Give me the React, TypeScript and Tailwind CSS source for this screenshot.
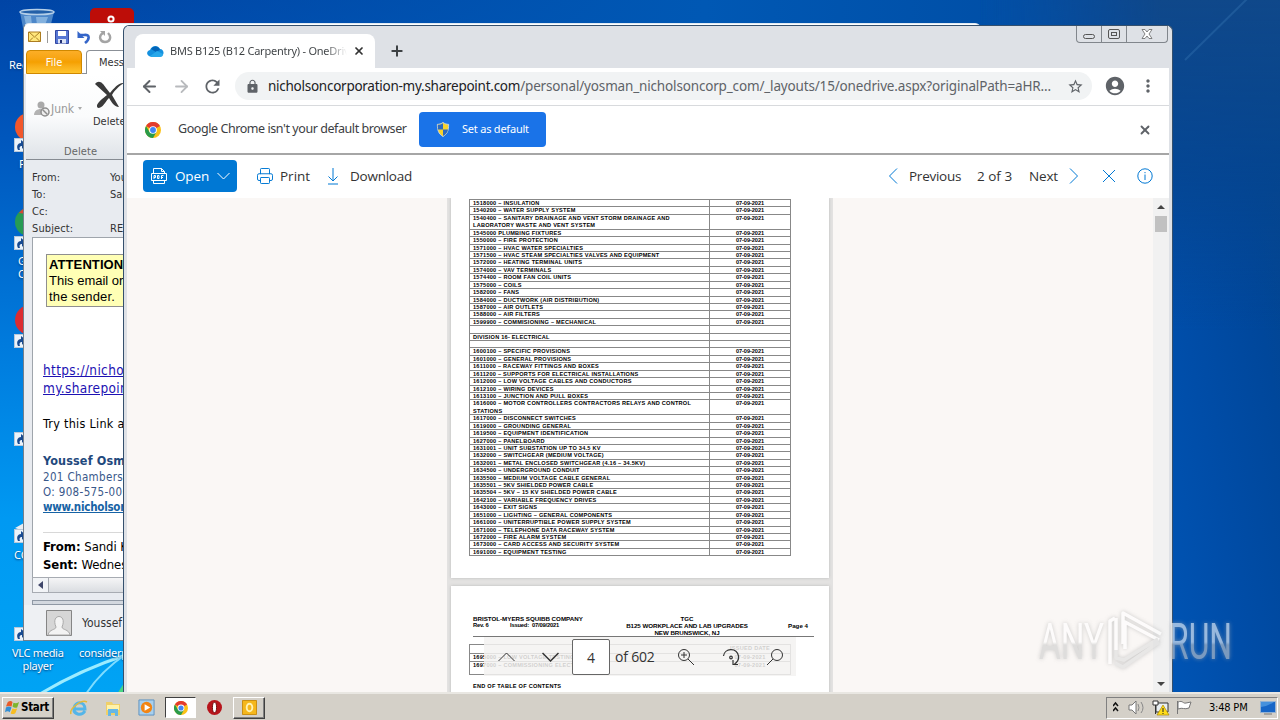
import type { ReactNode } from "react"
import { ArrowLeft, ArrowRight, Plus, Printer, X } from "lucide-react"
import { MdAccountCircle, MdLock, MdMoreVert, MdRefresh, MdStarBorder } from "react-icons/md"

type Row = { text: string; second?: string; date?: boolean }

const row = (text: string, second?: string): Row => ({ text, second, date: true })

const rows: Row[] = [
    row("1518000 – INSULATION"),
    row("1540200 – WATER SUPPLY SYSTEM"),
    row("1540400 – SANITARY DRAINAGE AND VENT STORM DRAINAGE AND", "LABORATORY WASTE AND VENT SYSTEM"),
    row("1545000 PLUMBING FIXTURES"),
    row("1550000 – FIRE PROTECTION"),
    row("1571000 – HVAC WATER SPECIALTIES"),
    row("1571500 – HVAC STEAM SPECIALTIES VALVES AND EQUIPMENT"),
    row("1572000 – HEATING TERMINAL UNITS"),
    row("1574000 – VAV TERMINALS"),
    row("1574400 – ROOM FAN COIL UNITS"),
    row("1575000 – COILS"),
    row("1582000 – FANS"),
    row("1584000 – DUCTWORK (AIR DISTRIBUTION)"),
    row("1587000 – AIR OUTLETS"),
    row("1588000 – AIR FILTERS"),
    row("1599900 – COMMISIONING – MECHANICAL"),
    { text: "" },
    { text: "DIVISION 16- ELECTRICAL" },
    { text: "" },
    row("1600100 – SPECIFIC PROVISIONS"),
    row("1601000 – GENERAL PROVISIONS"),
    row("1611000 – RACEWAY FITTINGS AND BOXES"),
    row("1611200 – SUPPORTS FOR ELECTRICAL INSTALLATIONS"),
    row("1612000 – LOW VOLTAGE CABLES AND CONDUCTORS"),
    row("1612100 – WIRING DEVICES"),
    row("1613100 – JUNCTION AND PULL BOXES"),
    row("1616000 – MOTOR CONTROLLERS CONTRACTORS RELAYS AND CONTROL", "STATIONS"),
    row("1617000 – DISCONNECT SWITCHES"),
    row("1619000 – GROUNDING GENERAL"),
    row("1619500 – EQUIPMENT IDENTIFICATION"),
    row("1627000 – PANELBOARD"),
    row("1631001 – UNIT SUBSTATION UP TO 34.5 KV"),
    row("1632000 – SWITCHGEAR (MEDIUM VOLTAGE)"),
    row("1632001 – METAL ENCLOSED SWITCHGEAR (4.16 – 34.5KV)"),
    row("1634500 – UNDERGROUND CONDUIT"),
    row("1635500 – MEDIUM VOLTAGE CABLE GENERAL"),
    row("1635501 – 5KV SHIELDED POWER CABLE"),
    row("1635504 – 5KV – 15 KV SHIELDED POWER CABLE"),
    row("1642100 – VARIABLE FREQUENCY DRIVES"),
    row("1643000 – EXIT SIGNS"),
    row("1651000 – LIGHTING – GENERAL COMPONENTS"),
    row("1661000 – UNITERRUPTIBLE POWER SUPPLY SYSTEM"),
    row("1671000 – TELEPHONE DATA RACEWAY SYSTEM"),
    row("1672000 – FIRE ALARM SYSTEM"),
    row("1673000 – CARD ACCESS AND SECURITY SYSTEM"),
    row("1691000 – EQUIPMENT TESTING"),
]

function ChromeLogo({ className }: { className: string }) {
    return (
        <svg viewBox="0 0 24 24" className={className}>
            <circle cx="12" cy="12" r="12" fill="#fbc116" />
            <path d="M12 12 1.6 6A12 12 0 0 1 22.4 6z" fill="#e33b2e" />
            <path d="M1.6 6A12 12 0 0 0 12 24l5.2-9L12 12 6.8 15z" fill="#2a9b4a" />
            <circle cx="12" cy="12" r="5.8" fill="#fff" />
            <circle cx="12" cy="12" r="4.4" fill="#4285f4" />
        </svg>
    )
}

function Shortcut({ className }: { className: string }) {
    return (
        <div className={`absolute left-[14px] h-[14px] w-[14px] border border-[#b8c8da] bg-[#eaf3fb] ${className}`}>
            <svg viewBox="0 0 12 12" className="h-3 w-3">
                <path d="M3 11C1 7 3 4 6 4V1l5 4-4 5V7C5 7 4 8 5 11z" fill="#174a91" />
            </svg>
        </div>
    )
}

function DesktopLabel({ className, children }: { className: string; children: ReactNode }) {
    return (
        <div className={`absolute whitespace-nowrap text-center font-['Noto_Sans',sans-serif] text-[11px] leading-[13px] text-white [text-shadow:0_1px_2px_#003a7a] ${className}`}>
            {children}
        </div>
    )
}

function Desktop() {
    return (
        <>
            <div className="absolute inset-x-0 top-0 h-[30px] bg-linear-to-r from-transparent via-[#0058b4] via-55% to-[#00479b]" />
            <div className="absolute inset-y-0 right-0 w-[300px] bg-[linear-gradient(80deg,#005fc6_0%,#0058bb_36%,#004da8_64%,#00479b_82%,#064488_100%)] [mask-image:linear-gradient(to_right,transparent,black_60%)]" />
            <div className="absolute right-0 top-0 h-[330px] w-[300px] bg-linear-to-b from-[#0f488a] via-[#06458f]/80 to-transparent [mask-image:linear-gradient(to_right,transparent,black_60%)]" />
            <svg className="absolute inset-0 h-full w-full" viewBox="0 0 1280 692">
                <path d="M1185 60 1248-2" stroke="#3b7cb8" strokeWidth="2" opacity="0.35" />
                <path d="M40 694Q80 670 126 655" stroke="#9cecff" strokeWidth="3" fill="none" />
                <path d="M86 694Q100 672 126 654" stroke="#7edcff" strokeWidth="2" fill="none" />
                <path d="M117 694 126 680V694z" fill="#49d884" />
                {/* recycle bin */}
                <path d="M20 12h34l-4 16H23z" fill="#5b93cf" opacity="0.85" />
                <path d="M24 16h7l1 9h-6zM36 17h12l-3 8h-8z" fill="#a9cdec" opacity="0.6" />
                <ellipse cx="37" cy="12" rx="17" ry="2.6" fill="#2360a8" stroke="#b5cfe8" strokeWidth="1.5" />
                <rect x="90" y="8" width="44" height="30" rx="5" fill="#bd0d08" />
                <circle cx="111" cy="19" r="2.6" fill="none" stroke="#fff" strokeWidth="2" />
                <circle cx="29" cy="127" r="14" fill="#f2572b" />
                <circle cx="29" cy="222" r="14" fill="#279b54" />
                <path d="M19 213q4-5 8-6v7z" fill="#d74635" />
                <circle cx="30" cy="320" r="15" fill="#dc2c31" />
                <path d="M15 528l9-5v8z" fill="#e9eef3" />
            </svg>
            <DesktopLabel className="left-[9px] top-[58px]">Recycle Bin</DesktopLabel>
            <DesktopLabel className="left-[19px] top-[157px]">Firefox</DesktopLabel>
            <DesktopLabel className="left-[18px] top-[254px] text-left">
                Google
                <br />
                Chrome
            </DesktopLabel>
            <DesktopLabel className="left-[14px] top-[548px]">CCleaner</DesktopLabel>
            <Shortcut className="top-[138px]" />
            <Shortcut className="top-[236px]" />
            <Shortcut className="top-[334px]" />
            <Shortcut className="top-[432px]" />
            <Shortcut className="top-[529px]" />
            <Shortcut className="top-[627px]" />
            <DesktopLabel className="left-[12px] top-[646px] tracking-[-0.300px]">
                VLC media
                <br />
                player
            </DesktopLabel>
            <DesktopLabel className="left-[79px] top-[646px] tracking-[-0.250px]">considerp</DesktopLabel>
        </>
    )
}

function MailWindow() {
    return (
        <div className="absolute left-[23px] top-[23px] flex h-[618px] w-[958px] flex-col overflow-hidden rounded-t-md border border-[#737f8c] border-t-[#dfe9f2] bg-[#e8ebf0] font-['DejaVu_Sans_Condensed','DejaVu_Sans',sans-serif] text-[11px] text-[#333]">
            <div className="flex h-[26px] shrink-0 items-center bg-white pl-1">
                <svg viewBox="0 0 84 14" className="h-[14px] w-[84px]">
                    <path d="M.5 2h12v9.500H.5z" fill="#ffe77c" stroke="#ac7c20" />
                    <path d="M1 2l5.500 5L12 2M1 11.500l4-4M12 11.500l-4-4" fill="none" stroke="#a87d22" />
                    <path d="M19.500 1v12" stroke="#999" />
                    <path d="M27.500.5h13v13h-13z" fill="#5777d4" stroke="#3247a2" />
                    <path d="M30 1h8v5h-8z" fill="#fff" />
                    <path d="M30 9h8v4.500h-8z" fill="#dce4f5" />
                    <path d="M32 10h2v3h-2z" fill="#223173" />
                    <path d="M52 5h4c6-1 6 4 1 8" fill="none" stroke="#3566c9" strokeWidth="2.600" />
                    <path d="M49.500 1v7h7z" fill="#3566c9" />
                    <path d="M75 3c-5 3-3 9 2 9s7-5 3-9" fill="none" stroke="#a4a4a4" strokeWidth="2.400" />
                    <path d="M72 1h5v5z" fill="#a4a4a4" />
                </svg>
            </div>
            <div className="flex h-6 shrink-0 bg-white pl-0.5">
                <div className="h-6 w-[56px] rounded-t border border-[#cf8800] bg-linear-to-b from-[#fcae26] via-[#f5a000] to-[#ffc52c] text-center leading-[23px] text-white">File</div>
                <div className="w-1 border-b border-[#8b9097]" />
                <div className="w-[80px] rounded-t border border-b-0 border-[#8b9097] bg-white pl-3 leading-[23px]">Message</div>
            </div>
            <div className="ml-0.5 flex h-[86px] shrink-0 flex-col border-b border-[#868b92] bg-linear-to-b from-white via-[#fafbfc] to-[#dfe3e8]">
                <div className="flex h-[69px]">
                    <div className="flex w-[59px] items-start gap-px pl-[8px] pt-[27px] text-[#999]">
                        <svg viewBox="0 0 16 16" className="h-4 w-4 shrink-0">
                            <circle cx="7" cy="4" r="3.500" fill="#aaa" />
                            <path d="M0 14c0-8 13-8 13 0z" fill="#b3b3b3" />
                            <circle cx="11" cy="11" r="4" fill="#eee" stroke="#8e8e8e" strokeWidth="1.500" />
                            <path d="m8.500 8.500 5 5" stroke="#8e8e8e" strokeWidth="1.500" />
                        </svg>
                        <span className="text-[12px] leading-4">Junk</span>
                        <span className="ml-[3px] mt-[6px] border-x-[2.500px] border-t-[3px] border-x-transparent border-t-[#aaa]" />
                    </div>
                    <div className="flex w-12 flex-col pl-2 pt-[7px]">
                        <svg viewBox="0 0 32 28" className="ml-px h-[28px] w-[32px]">
                            <path d="M1 3c4-5 8-1 11 4l4 5c4-5 9-11 14-10-5 3-10 8-12 12l7 12c-5 0-8-6-10-9-4 4-6 10-11 10-4-3 4-9 9-13z" fill="#3a3a3a" />
                        </svg>
                        <span className="mt-[5px] leading-[15px]">Delete</span>
                    </div>
                </div>
                <div className="pl-[38px] pt-px leading-[15px] tracking-[0.1px] text-[#666]">Delete</div>
            </div>
            <div className="h-[77px] shrink-0 pl-2 pt-[9px] leading-[17px]">
                {[
                    ["From:", "Youssef Osman"],
                    ["To:", "Sandi Kane"],
                    ["Cc:", ""],
                    ["Subject:", "RE: BMS"],
                ].map(([label, value]) => (
                    <div key={label} className="flex">
                        <span className="w-[78px] tracking-[0.100px]">{label}</span>
                        <span>{value}</span>
                    </div>
                ))}
            </div>
            <div className="ml-2 flex h-[355px] shrink-0 flex-col border border-[#9fa5ac] bg-white pl-[10px] pt-4 text-black">
                <div className="ml-[3px] h-[53px] w-[500px] whitespace-nowrap border border-[#8f8f8f] bg-[#ffffb5] pl-0.5 pt-0.5 font-['Liberation_Sans',sans-serif] text-[13px] leading-4">
                    <div className="font-bold tracking-[0.100px]">ATTENTION:</div>
                    <div>This email originated</div>
                    <div className="tracking-[0.150px]">the sender.</div>
                </div>
                <div className="mt-[54px] h-9 text-[13.500px] leading-[18px] tracking-[0.350px] text-[#1d12b3] underline">
                    https://nicholson
                    <br />
                    my.sharepoint.com
                </div>
                <div className="mt-[18px] text-[12.500px] leading-[18px] tracking-[0.280px]">Try this Link again</div>
                <div className="mt-[19px] text-[12.500px] font-bold leading-[18px] tracking-[0.150px] text-[#1f497d]">Youssef Osman</div>
                <div className="text-[11.500px] leading-[15px] tracking-[0.350px] text-[#39588a]">201 Chambers</div>
                <div className="text-[11.500px] leading-[15px] tracking-[0.350px] text-[#39588a]">O: 908-575-0000</div>
                <div className="text-[11.500px] font-bold leading-[15px] tracking-[-0.250px] text-[#1763a5] underline">www.nicholson</div>
                <div className="mt-[17px] border-t border-[#d8d8d8] pt-[5px] text-[13px] leading-[18px] tracking-[-0.050px]">
                    <b>From:</b> Sandi Kane
                    <br />
                    <b>Sent:</b> Wednesday
                </div>
            </div>
            <div className="-mt-[15px] ml-2 flex h-4 shrink-0 border border-[#a7abb2] bg-linear-to-b from-[#f5f5f6] to-[#dadde1]">
                <div className="flex w-4 items-center justify-center border-r border-[#a7abb2] bg-[#f2f4f7]">
                    <span className="border-y-[4px] border-r-[5px] border-y-transparent border-r-[#40476b]" />
                </div>
            </div>
            <div className="ml-2 mt-[7px] h-[5px] shrink-0 border border-[#8f98a4] bg-[#d3d8df]" />
            <div className="flex h-[35px] items-center bg-[#eef0f3] pl-[22px]">
                <svg viewBox="0 0 26 26" className="h-[26px] w-[26px]">
                    <path d="M.5.5h25v25H.5z" fill="#d6d6d6" stroke="#858585" />
                    <path d="M2 25c1-6 8-5 8-8-6-14 12-14 6 0 0 3 7 2 8 8z" fill="#f3f3f3" stroke="#a9a9a9" />
                </svg>
                <span className="ml-[10px] text-[12px]">Youssef Osman</span>
            </div>
        </div>
    )
}

function TitleBar() {
    return (
        <div className="flex h-[42px] shrink-0 items-start bg-[#dee1e6]">
            <div className="ml-2 mt-2 flex h-[34px] w-[240px] items-center rounded-t-lg bg-white pl-3 pr-[10px]">
                <svg viewBox="0 0 17 11" className="h-[11px] w-[17px] shrink-0">
                    <path d="M4 10.500C-1 10-1 5 3 4c2-5 8-5 10-1 4 0 5 6 1 7.500z" fill="#1490df" />
                    <path d="M4 3c3-4 8-3 9 1L9 6z" fill="#0364b8" />
                    <path d="m3 10 7-5 6 3c0 2-1 3-3 3H4z" fill="#28a8ea" />
                </svg>
                <div className="ml-[6px] w-[177px] overflow-hidden whitespace-nowrap bg-linear-to-r from-[#3c4043] from-88% to-transparent bg-clip-text font-['Noto_Sans',sans-serif] text-[11px] tracking-[-0.240px] text-transparent">
                    BMS B125 (B12 Carpentry) - OneDrive
                </div>
                <X className="ml-auto h-3 w-3 shrink-0 text-[#333]" strokeWidth={3.4} />
            </div>
            <Plus className="ml-[14px] mt-[17px] h-4 w-4 text-[#3c4043]" strokeWidth={3} />
            <div className="ml-auto mr-px flex h-[17px] rounded-b-sm border border-t-0 border-[#81868c]">
                <div className="flex w-[25px] items-center justify-center border-r border-[#81868c] pt-1">
                    <span className="h-[5px] w-[12px] rounded-sm border border-[#555]" />
                </div>
                <div className="flex w-[25px] items-center justify-center border-r border-[#81868c]">
                    <span className="flex h-[10px] w-[12px] items-center justify-center rounded-xs border border-[#555]">
                        <span className="h-1 w-[6px] border border-[#555]" />
                    </span>
                </div>
                <div className="flex w-[40px] items-center justify-center">
                    <svg viewBox="0 0 12 10" className="h-[10px] w-3">
                        <path d="M1 .5h3l2 2.500 2-2.500h3L8 5l3 4.500H8L6 7 4 9.500H1L4 5z" fill="#fff" stroke="#666" strokeWidth=".8" />
                    </svg>
                </div>
            </div>
        </div>
    )
}

function AddressBar() {
    return (
        <div className="flex h-[38px] shrink-0 items-center border-b border-[#d8dadd] bg-white pb-px pl-[13px] text-[#5f6368]">
            <ArrowLeft className="h-[19px] w-[19px]" strokeWidth={2.5} />
            <ArrowRight className="ml-[13px] h-[19px] w-[19px] text-[#b8babd]" strokeWidth={2.3} />
            <MdRefresh className="ml-[11px] h-[21px] w-[21px]" />
            <div className="ml-3 flex h-7 w-[857px] items-center rounded-full bg-[#f1f3f4] pl-[10px] pr-[8px]">
                <MdLock className="h-[15px] w-[15px] shrink-0" />
                <div className="ml-[8px] whitespace-nowrap font-['Noto_Sans',sans-serif] text-[13.500px] tracking-[-0.190px]">
                    <span className="tracking-[-0.260px] text-[#202124]">nicholsoncorporation-my.sharepoint.com</span>
                    <span className="tracking-[-0.160px]">/personal/yosman_nicholsoncorp_com/_layouts/15/onedrive.aspx?originalPath=aHR...</span>
                </div>
                <MdStarBorder className="ml-auto h-[17px] w-[17px] shrink-0" />
            </div>
            <MdAccountCircle className="ml-[12px] h-[22px] w-[22px]" />
            <MdMoreVert className="ml-[12px] h-[20px] w-[20px]" />
        </div>
    )
}

function DefaultBrowserBar() {
    return (
        <div className="flex h-[49px] shrink-0 items-center border-b-2 border-[#a6a6a6] bg-white pl-[18px] font-['Noto_Sans',sans-serif]">
            <ChromeLogo className="h-4 w-4" />
            <span className="ml-[17px] w-[229px] whitespace-nowrap text-[12.500px] tracking-[-0.430px] text-[#3c4043]">Google Chrome isn't your default browser</span>
            <button className="ml-[12px] flex h-[35px] w-[127px] items-center rounded bg-[#1a73e8] pl-[17px] text-[11px] tracking-[-0.220px] text-white">
                <svg viewBox="0 0 14 16" className="mr-[12px] h-[15px] w-[14px]">
                    <path d="M7 .5c2 1.500 4 2 6 2 0 6-1 10-6 13-5-3-6-7-6-13 2 0 4-.5 6-2z" fill="#f9d32b" stroke="#cdd7dd" />
                    <path d="M7 1.300V8H1.500V3C4 3 5 2.500 7 1.300zM7 8h5.300C12 11 10 13 7 15z" fill="#2c6ac1" />
                </svg>
                Set as default
            </button>
            <X className="ml-auto mr-[17px] h-[14px] w-[14px] text-[#5f6368]" strokeWidth={3.2} />
        </div>
    )
}

function CommandBar() {
    return (
        <div className="flex h-[43px] shrink-0 items-center bg-white pb-px pl-4 pr-4 font-['Open_Sans',sans-serif] text-[13.500px] text-[#333]">
            <div className="flex h-8 w-[94px] items-center rounded-sm bg-[#0078d4] pl-2 text-white">
                <svg viewBox="0 0 16 16" className="h-4 w-4 shrink-0" fill="none" stroke="currentColor">
                    <path d="M2.500 5V.5h8l3 3V5M10.500.5v3h3M2.500 13v2.500h11V13M.5 5.500h15v7H.5z" />
                    <path d="M3 11V7.500h1.500v2H3M6.500 7.500v3H8v-3zM10.500 11V7.500h2M10.500 9.500H12" />
                </svg>
                <span className="ml-[8px] w-[42px] tracking-[-0.150px]">Open</span>
                <svg viewBox="0 0 13 8" className="h-2 w-[13px]" fill="none" stroke="currentColor">
                    <path d="m.5 1 6 6 6-6" />
                </svg>
            </div>
            <Printer className="ml-[19px] h-[18px] w-[18px] text-[#0078d4]" strokeWidth={1.3} />
            <span className="ml-[6px] w-[31px]">Print</span>
            <svg viewBox="0 0 14 17" className="ml-[15px] h-[17px] w-[14px]" fill="none" stroke="#0078d4">
                <path d="M7 0v13M2.500 8.500 7 13l4.500-4.500M2 16h10" />
            </svg>
            <span className="ml-[10px] tracking-[-0.250px]">Download</span>
            <svg viewBox="0 0 10 16" className="ml-auto h-4 w-[10px]" fill="none" stroke="#0078d4">
                <path d="M9 .5 1.500 8 9 15.500" />
            </svg>
            <span className="ml-[11px] w-[53px] tracking-[-0.250px]">Previous</span>
            <span className="ml-[15px] w-9 whitespace-nowrap">2 of 3</span>
            <span className="ml-[16px] w-7 tracking-[-0.150px]">Next</span>
            <svg viewBox="0 0 10 16" className="ml-[12px] h-4 w-[10px]" fill="none" stroke="#0078d4">
                <path d="M1 .5 8.500 8 1 15.500" />
            </svg>
            <svg viewBox="0 0 14 14" className="ml-[23px] h-[14px] w-[14px]" fill="none" stroke="#0078d4">
                <path d="m1 1 12 12M13 1 1 13" />
            </svg>
            <svg viewBox="0 0 16 16" className="ml-[21px] h-4 w-4" fill="none" stroke="#0078d4">
                <circle cx="8" cy="8" r="7.200" />
                <path d="M8 6.500V12M8 4v1.200" />
            </svg>
        </div>
    )
}

function ContentsTable() {
    return (
        <div className="ml-[22px] w-[322px] border-b border-r border-[#888]">
            {rows.map((r, i) => (
                <div key={i} className={`flex border-l border-t border-[#888] ${r.second ? "h-[14.860px]" : "h-[7.430px]"}`}>
                    <div className="w-[240px] whitespace-nowrap border-r border-[#888] pl-[3px]">
                        <div>{r.text}</div>
                        {r.second && <div>{r.second}</div>}
                    </div>
                    <div className="flex-1 text-center tracking-[-0.050px]">{r.date && "07-09-2021"}</div>
                </div>
            ))}
        </div>
    )
}

function PageControls() {
    return (
        <div className="absolute left-[357px] top-[439px] flex h-[39px] w-[312px] items-center bg-[#f3f2f1]/85 font-['Open_Sans',sans-serif] text-[14px] font-normal text-[#333]">
            <svg viewBox="0 0 17 10" className="ml-[14px] h-[10px] w-[17px]" fill="none" stroke="currentColor">
                <path d="m.5 9 8-8 8 8" />
            </svg>
            <svg viewBox="0 0 17 10" className="ml-[27px] h-[10px] w-[17px]" fill="none" stroke="currentColor" strokeWidth="1.500">
                <path d="m.5 1 8 8 8-8" />
            </svg>
            <div className="ml-[13px] flex h-9 w-[38px] shrink-0 items-center justify-center rounded-xs border border-[#666] bg-white pt-0.5">4</div>
            <span className="ml-[5px] w-[40px] whitespace-nowrap tracking-[-0.200px]">of 602</span>
            <svg viewBox="0 0 18 18" className="ml-[22px] h-[18px] w-[18px]" fill="none" stroke="currentColor">
                <circle cx="7" cy="7" r="5.500" />
                <path d="m11 11 6 6M4 7h6M7 4v6" />
            </svg>
            <svg viewBox="0 0 18 18" className="ml-[27px] h-[18px] w-[18px]" fill="none" stroke="currentColor" strokeWidth="1.200">
                <path d="M1.500 8c1-8 13-9 15 0 .5 4-1 6-4 8M11 12v4.500h5" />
                <circle cx="9" cy="9.500" r="1.300" />
            </svg>
            <svg viewBox="0 0 18 18" className="ml-[26px] h-[18px] w-[18px]" fill="none" stroke="currentColor">
                <circle cx="11" cy="7" r="5.500" />
                <path d="m7 11-6 6" />
            </svg>
        </div>
    )
}

function Viewer() {
    return (
        <div className="relative flex min-h-0 flex-1 justify-between bg-[#faf7f5]">
            <div className="ml-[320px] flex w-[386px] flex-col items-center overflow-hidden bg-[#e3e2e1] font-['Liberation_Sans',sans-serif] text-[5.600px] font-bold leading-[7.430px] tracking-[0.240px] text-black">
                <div className="h-[380px] w-[378px] shrink-0 overflow-hidden bg-white shadow-[0_0_3px_#bbb]">
                    <div className="-ml-1 pt-px">
                        <ContentsTable />
                    </div>
                </div>
                <div className="mt-[8px] h-[130px] w-[378px] shrink-0 bg-white pl-[22px] pt-[29px] shadow-[0_0_3px_#bbb]">
                    <div className="flex h-[22px] w-[341px] border-b border-[#777] text-[6.200px] leading-[7px]">
                        <div className="w-[152px] whitespace-nowrap tracking-[0]">
                            <div>BRISTOL-MYERS SQUIBB COMPANY</div>
                            <div className="flex text-[5.800px] tracking-[-0.200px]">
                                <span className="w-[37px]">Rev. 6</span>
                                <span className="w-[22px]">Issued:</span>
                                <span>07/09/2021</span>
                            </div>
                        </div>
                        <div className="w-[124px] whitespace-nowrap text-center tracking-[-0.050px]">
                            <div>TGC</div>
                            <div>B125 WORKPLACE AND LAB UPGRADES</div>
                            <div>NEW BRUNSWICK, NJ</div>
                        </div>
                        <div className="ml-auto pr-[6px] pt-[7px] tracking-[0]">Page 4</div>
                    </div>
                    <div className="-ml-[4px] mt-[7px] h-[31px] w-[322px] border border-[#888]">
                        {["", "1695000 – LOW VOLTAGE TESTING CABLES", "1697000 – COMMISSIONING ELECTRICAL"].map((t, i) => (
                            <div key={t} className={`flex h-2 pl-[3px] ${i > 0 ? "border-t border-[#888]" : ""}`}>
                                <span className="w-[237px]">{t}</span>
                                <span className="flex-1 text-center">{i === 0 ? "ISSUED DATE" : "07-09-2021"}</span>
                            </div>
                        ))}
                    </div>
                    <div className="mt-[8px]">END OF TABLE OF CONTENTS</div>
                </div>
            </div>
            <div className="flex w-4 flex-col items-center bg-[#f1f1f1] pt-[7px]">
                <span className="border-x-4 border-b-[4px] border-x-transparent border-b-[#444]" />
                <span className="mt-[7px] h-4 w-3 bg-[#c1c1c1]" />
                <span className="mb-[6px] mt-auto border-x-4 border-t-[4px] border-x-transparent border-t-[#444]" />
            </div>
            <PageControls />
        </div>
    )
}

function BrowserWindow() {
    return (
        <div className="absolute left-[123px] top-[25px] flex h-[667px] w-[1050px] flex-col rounded-t-md border border-b-0 border-[#35506d] bg-[#dee1e6] px-[3px]">
            <TitleBar />
            <AddressBar />
            <DefaultBrowserBar />
            <CommandBar />
            <Viewer />
        </div>
    )
}

function Watermark() {
    return (
        <svg viewBox="0 0 200 68" className="absolute left-[1034px] top-[606px] h-[68px] w-[200px] opacity-60 drop-shadow-[0_0_2px_#aaa]">
            <defs>
                <linearGradient id="mark" x1="0" y1="0" x2="0" y2="1">
                    <stop offset="0.500" stopColor="#fff" />
                    <stop offset="0.550" stopColor="#ccc" />
                </linearGradient>
            </defs>
            <g fontFamily="'Roboto', sans-serif" fontSize="50" fill="url(#mark)">
                <text x="5" y="53" textLength="65" lengthAdjust="spacingAndGlyphs">ANY</text>
                <text x="135" y="53" textLength="63" lengthAdjust="spacingAndGlyphs">RUN</text>
            </g>
            <path d="M76 58V15l5-3M82 44V12M89 38V7l38 21M91 43V16l34 18" fill="none" stroke="#fff" strokeWidth="3.500" strokeLinejoin="round" />
            <path d="m125 36-36 25-8-4M82 44v8l8 2 34-21" fill="none" stroke="#ddd" strokeWidth="3.500" strokeLinejoin="round" />
        </svg>
    )
}

function Taskbar() {
    return (
        <div className="flex h-7 items-center bg-[#d4d0c8] pl-[2px] pr-[2px] shadow-[inset_0_2px_#e9e7e2]">
            <div className="mt-[3px] flex h-[22px] w-[52px] items-center border border-b-[#404040] border-l-white border-r-[#404040] border-t-white pl-0.5 font-['DejaVu_Sans_Condensed','DejaVu_Sans',sans-serif] text-[11.500px] font-bold tracking-[-0.300px] text-black shadow-[inset_-1px_-1px_#808080]">
                <svg viewBox="0 0 16 16" className="mr-px h-[15px] w-[15px] shrink-0">
                    <path d="M3 2q3-2 5 0L7 7Q4 6 1 7z" fill="#e85b28" />
                    <path d="M9 3q3 1 6-1l-2 6q-3 1-5-1z" fill="#7eb52d" />
                    <path d="M1 8q3-2 6 0l-2 5q-2-2-5 0z" fill="#318fd5" />
                    <path d="M8 9q2 1 5 0l-2 5q-3 2-5 0z" fill="#f7bd22" />
                </svg>
                Start
            </div>
            <div className="mt-[3px] flex h-[22px] items-center">
                <svg viewBox="0 0 18 18" className="ml-[16px] h-[18px] w-[18px]" fill="none">
                    <path d="M15 12c-4 6-12 3-11-3 1-7 11-7 11 1H5" stroke="#54b5e8" strokeWidth="3" />
                    <path d="M1 15C-1 10 11 0 17 3" stroke="#e6b937" strokeWidth="1.500" />
                </svg>
                <svg viewBox="0 0 18 18" className="ml-[16px] h-[18px] w-[18px]">
                    <path d="M2 3h6l1 2h7v11H2z" fill="#efcf68" />
                    <path d="M3 6h12v5H3z" fill="#fff2a9" />
                    <path d="M4 10h10v7h-3v-3H7v3H4z" fill="#67b7e4" />
                </svg>
                <svg viewBox="0 0 18 18" className="ml-[16px] h-[17px] w-[17px]">
                    <path d="M1 1h16v16H1z" fill="#a8d0ee" stroke="#5c91bf" />
                    <circle cx="9" cy="9" r="6" fill="#f28514" />
                    <path d="m7 5.500 6 3.500-6 3.500z" fill="#fff" />
                </svg>
                <div className="ml-[10px] flex h-[21px] w-[31px] items-center justify-center border border-b-white border-l-[#404040] border-r-white border-t-[#404040] bg-white">
                    <ChromeLogo className="h-[14px] w-[14px]" />
                </div>
                <svg viewBox="0 0 16 16" className="ml-[11px] h-[15px] w-[15px]">
                    <circle cx="8" cy="8" r="8" fill="#b7141b" />
                    <ellipse cx="8" cy="8" rx="2.200" ry="5.500" fill="#fff" stroke="#6c0609" />
                </svg>
                <div className="ml-[11px] flex h-[22px] w-8 items-center justify-center border border-b-[#404040] border-l-white border-r-[#404040] border-t-white shadow-[inset_-1px_-1px_#808080]">
                    <svg viewBox="0 0 16 16" className="h-[15px] w-[15px]">
                        <path d="M.5.5h15v15H.5z" fill="#f5b71c" stroke="#c78a0c" />
                        <ellipse cx="8" cy="8" rx="3" ry="4" fill="none" stroke="#fff2b5" strokeWidth="2" />
                    </svg>
                </div>
            </div>
            <div className="ml-auto mt-[3px] flex h-[22px] w-[172px] items-center border border-b-white border-l-[#808080] border-r-white border-t-[#808080] pl-[6px]">
                <svg viewBox="0 0 88 18" className="h-[18px] w-[88px] shrink-0" fill="none">
                    <path d="m0 7 2.500-3L5 7M0 12l2.500-3L5 12" stroke="#111" strokeWidth="1.500" />
                    <path d="M16 6h3l4-4v13l-4-4h-3z" fill="#fff" stroke="#777" />
                    <path d="M25 5q2 4 0 7M28 3q4 6 0 11" stroke="#888" />
                    <path d="M43 4h12v9H43z" fill="#e8eef2" stroke="#333" />
                    <path d="M40 2h5v4h-5zM42.500 6v9" stroke="#333" fill="#fff" />
                    <path d="m50 6 6 10H44z" fill="#ffdc18" stroke="#ac8a00" strokeWidth=".7" />
                    <path d="M50 9v4M50 14v1" stroke="#222" />
                    <path d="M64.500 2v13M65 3c5-2 5 2 8 1l5-1-2 6c-5 2-6-1-11 1z" fill="#fff" stroke="#777" />
                </svg>
                <span className="ml-[8px] w-10 whitespace-nowrap pt-px font-['DejaVu_Sans_Condensed','DejaVu_Sans',sans-serif] text-[11px] tracking-[-0.200px] text-black">3:48 PM</span>
                <svg viewBox="0 0 16 14" className="ml-auto mr-px h-[14px] w-[16px]">
                    <path d="M.5.5h15v11H.5z" fill="#1766c7" stroke="#94b2d3" />
                    <path d="M1 6q7-1 13-5H1z" fill="#4691dd" />
                    <path d="M4 13h8" stroke="#777" />
                </svg>
            </div>
        </div>
    )
}

export default function App() {
    return (
        <div className="flex h-[720px] w-[1280px] flex-col overflow-hidden">
            <div className="relative h-[692px] overflow-hidden bg-[linear-gradient(180deg,#0044a5_0%,#0057bd_20%,#007bdd_50%,#0099f2_75%,#00a3f4_100%)]">
                <Desktop />
                <MailWindow />
                <BrowserWindow />
                <Watermark />
            </div>
            <Taskbar />
        </div>
    )
}
